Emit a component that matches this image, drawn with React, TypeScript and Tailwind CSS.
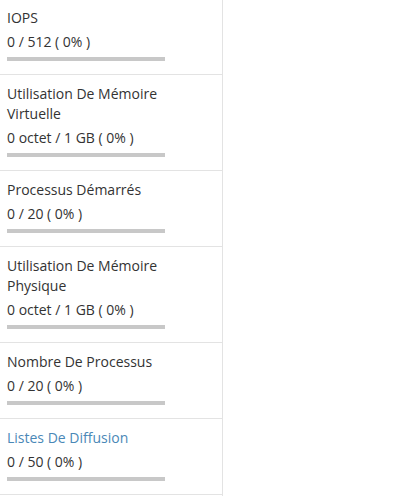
import React from "react";

type Stat = {
  label: string;
  value: string;
  percent: number;
  link?: boolean;
};

const STATS: Stat[] = [
  { label: "IOPS", value: "0 / 512 ( 0% )", percent: 0 },
  { label: "Utilisation De Mémoire Virtuelle", value: "0 octet / 1 GB ( 0% )", percent: 0 },
  { label: "Processus Démarrés", value: "0 / 20 ( 0% )", percent: 0 },
  { label: "Utilisation De Mémoire Physique", value: "0 octet / 1 GB ( 0% )", percent: 0 },
  { label: "Nombre De Processus", value: "0 / 20 ( 0% )", percent: 0 },
  { label: "Listes De Diffusion", value: "0 / 50 ( 0% )", percent: 0, link: true },
];

function StatRow({ stat }: { stat: Stat }) {
  return (
    <div className="border-b border-[#e3e3e3] pl-[7px] pr-[30px] pt-[9px] pb-[13px]">
      {stat.link ? (
        <a href="#" className="block text-[14px] leading-[20px] text-[#4a88b7]">
          {stat.label}
        </a>
      ) : (
        <div className="text-[14px] leading-[20px] text-[#333333]">{stat.label}</div>
      )}
      <div className="mt-[4px] text-[14px] leading-[20px] text-[#333333]">{stat.value}</div>
      <div className="mt-[5px] h-[4px] w-[158px] bg-[#c8c8c8]">
        <div className="h-full bg-[#5cb85c]" style={{ width: `${stat.percent}%` }} />
      </div>
    </div>
  );
}

export default function App() {
  return (
    <div className="h-[496px] w-[404px] overflow-hidden bg-white font-['Open_Sans',sans-serif]">
      <div className="-mt-px w-[223px] border-r border-[#e3e3e3]">
        {STATS.map((stat) => (
          <StatRow key={stat.label} stat={stat} />
        ))}
        <div className="h-[4px]" />
      </div>
    </div>
  );
}
